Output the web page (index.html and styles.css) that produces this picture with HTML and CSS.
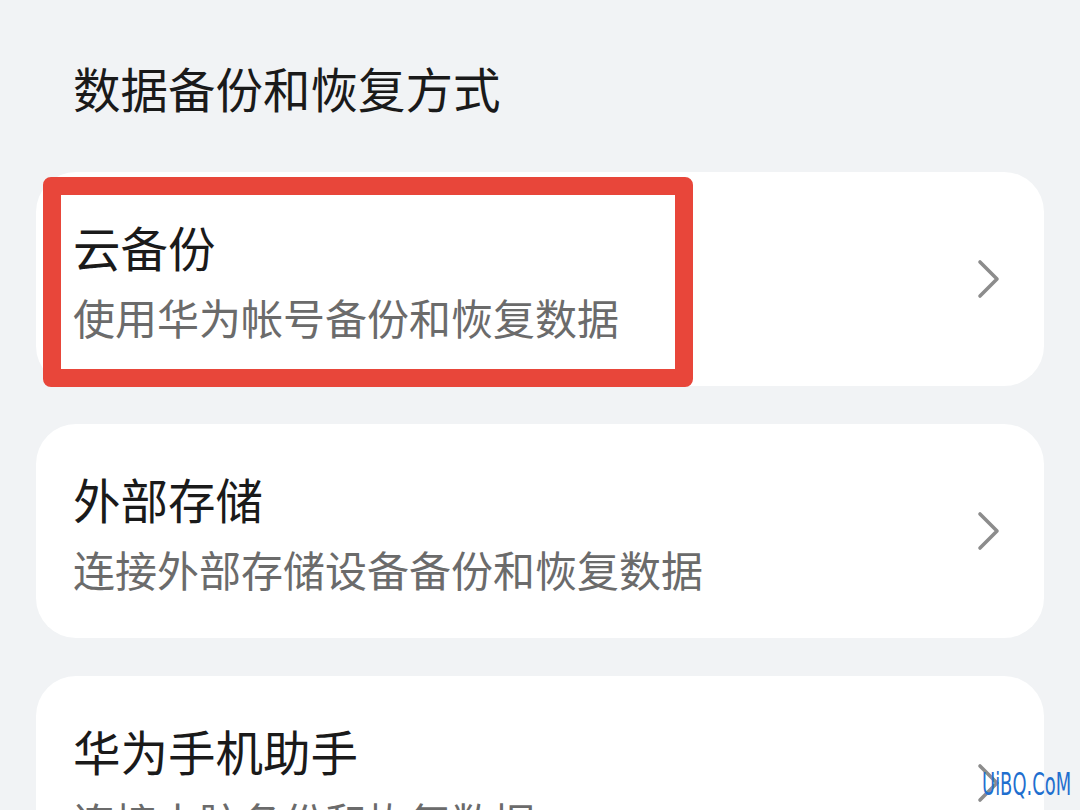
FILE: index.html
```html
<!DOCTYPE html>
<html lang="zh-CN">
<head>
    <meta charset="UTF-8">
    <meta name="viewport" content="width=device-width, initial-scale=1.0">
    <title>数据备份和恢复方式</title>
    <link rel="stylesheet" href="styles.css">
</head>
<body>
    <div class="page">
        <h1 class="section-title">数据备份和恢复方式</h1>

        <div class="list">
            <!-- 云备份 -->
            <div class="item">
                <div class="item-text">
                    <div class="item-title">云备份</div>
                    <div class="item-desc">使用华为帐号备份和恢复数据</div>
                </div>
                <svg class="chevron" width="24" height="40" viewBox="0 0 24 40">
                    <path d="M3 3 L20 20 L3 37" fill="none" stroke="#8c8c8c" stroke-width="3.6" stroke-linecap="round" stroke-linejoin="round"/>
                </svg>
                <div class="highlight"></div>
            </div>

            <!-- 外部存储 -->
            <div class="item">
                <div class="item-text">
                    <div class="item-title">外部存储</div>
                    <div class="item-desc">连接外部存储设备备份和恢复数据</div>
                </div>
                <svg class="chevron" width="24" height="40" viewBox="0 0 24 40">
                    <path d="M3 3 L20 20 L3 37" fill="none" stroke="#8c8c8c" stroke-width="3.6" stroke-linecap="round" stroke-linejoin="round"/>
                </svg>
            </div>

            <!-- 华为手机助手 -->
            <div class="item">
                <div class="item-text">
                    <div class="item-title">华为手机助手</div>
                    <div class="item-desc">连接电脑备份和恢复数据</div>
                </div>
                <svg class="chevron" width="24" height="40" viewBox="0 0 24 40">
                    <path d="M3 3 L20 20 L3 37" fill="none" stroke="#8c8c8c" stroke-width="3.6" stroke-linecap="round" stroke-linejoin="round"/>
                </svg>
            </div>
        </div>

        <div class="watermark">UiBQ.CoM</div>
    </div>
</body>
</html>
```

FILE: styles.css
```css
body {
    margin: 0;
    padding: 0;
    background-color: #f1f3f5;
    font-family: "Noto Sans CJK SC", "Noto Sans", sans-serif;
}
.page {
    position: relative;
    height: 810px;
    overflow: hidden;
    padding: 0 36px;
}
.section-title {
    margin: 60px 0 56px 37px;
    font-size: 47.5px;
    line-height: 56px;
    font-weight: normal;
    color: #1a1a1a;
}
.list {
    display: flex;
    flex-direction: column;
    gap: 38px;
}
.item {
    position: relative;
    display: flex;
    align-items: center;
    justify-content: space-between;
    height: 214px;
    box-sizing: border-box;
    padding: 0 43px 0 37px;
    background-color: #fff;
    border-radius: 40px;
}
.item-text {
    display: flex;
    flex-direction: column;
    gap: 17px;
    padding-top: 2px;
}
.item-title {
    font-size: 47.5px;
    line-height: 56px;
    color: #1a1a1a;
}
.item-desc {
    font-size: 42px;
    line-height: 50px;
    color: #6b6b6b;
}
.chevron {
    flex-shrink: 0;
}

/* Marco rojo de resaltado */
.highlight {
    position: absolute;
    left: 7px;
    top: 5px;
    width: 650px;
    height: 210px;
    box-sizing: border-box;
    border: 18px solid #e8463a;
    border-radius: 8px;
}

.watermark {
    position: absolute;
    right: 9px;
    bottom: 7px;
    font-family: "DejaVu Sans", sans-serif;
    font-size: 32px;
    color: #1f6fcf;
    transform: scaleX(0.56);
    transform-origin: right bottom;
}
```
